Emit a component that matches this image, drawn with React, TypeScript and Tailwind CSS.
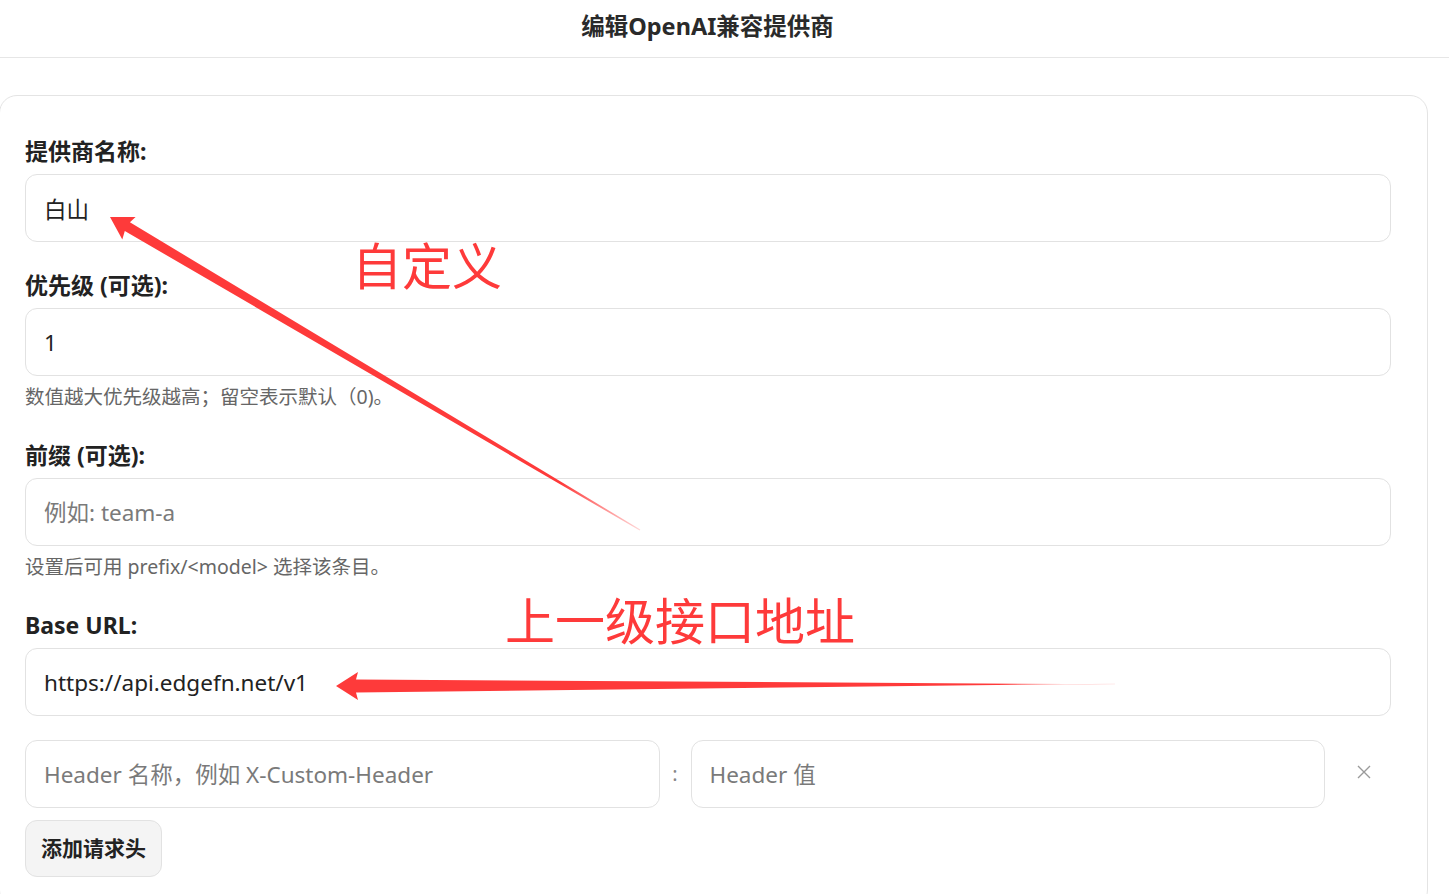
import React from "react";

const font = "font-['Noto_Sans','Noto_Sans_CJK_SC',sans-serif]";

const inputCls =
  "block w-full h-[68px] rounded-[12px] border border-[#e2e2e2] bg-white px-[18px] text-[22.5px] text-[#222] outline-none placeholder:text-[#7a7a7a]";

const Label: React.FC<{ children: React.ReactNode; className?: string }> = ({
  children,
  className = "",
}) => (
  <label
    className={`block text-[23px] leading-[30px] font-bold text-[#222] mb-[8px] ${className}`}
  >
    {children}
  </label>
);

const Hint: React.FC<{ children: React.ReactNode }> = ({ children }) => (
  <p className="mt-[8px] text-[19.5px] leading-[26px] text-[#666]">{children}</p>
);

// 标注用的箭头（覆盖在表单上面）
const Arrows = () => (
  <svg
    className="pointer-events-none absolute left-0 top-0"
    width="1449"
    height="894"
    viewBox="0 0 1449 894"
  >
    <defs>
      <linearGradient id="fade1" gradientUnits="userSpaceOnUse" x1="110" y1="217" x2="640" y2="530">
        <stop offset="0" stopColor="#fe3a3a" />
        <stop offset="0.85" stopColor="#fe3a3a" />
        <stop offset="1" stopColor="#fe3a3a" stopOpacity="0.2" />
      </linearGradient>
      <linearGradient id="fade2" gradientUnits="userSpaceOnUse" x1="336" y1="686" x2="1115" y2="684">
        <stop offset="0" stopColor="#fe3a3a" />
        <stop offset="0.85" stopColor="#fe3a3a" />
        <stop offset="1" stopColor="#fe3a3a" stopOpacity="0.2" />
      </linearGradient>
    </defs>
    <polygon
      fill="url(#fade1)"
      points="110,217 122.3,239.4 124.8,231.0 639.7,530.5 640.3,529.5 129.9,222.3 135.6,217"
    />
    <polygon
      fill="url(#fade2)"
      points="336,686 358,672 356,679.5 1115,684.3 1115,683.7 356,692.5 358,700"
    />
  </svg>
);

export default function App() {
  return (
    <div className={`relative min-h-[894px] overflow-hidden bg-white ${font}`}>
      <header className="flex h-[58px] items-center justify-center border-b border-[#e6e6e6] pb-[4px] pr-[34px]">
        <h1 className="text-[23.5px] font-bold text-[#2a2a2a]">编辑OpenAI兼容提供商</h1>
      </header>

      <div className="mt-[37px] -ml-[1px] w-[1429px] rounded-[18px] border border-[#e4e4e4] pt-[40px] pb-[30px] pl-[25px] pr-[36px]">
        <Label>提供商名称:</Label>
        <input className={inputCls} defaultValue="白山" />

        <Label className="mt-[28px]">优先级 (可选):</Label>
        <input className={inputCls} defaultValue="1" />
        <Hint>数值越大优先级越高；留空表示默认（0)。</Hint>

        <Label className="mt-[30px]">前缀 (可选):</Label>
        <input className={inputCls} placeholder="例如: team-a" />
        <Hint>设置后可用 prefix/&lt;model&gt; 选择该条目。</Hint>

        <Label className="mt-[30px]">Base URL:</Label>
        <input className={inputCls} defaultValue="https://api.edgefn.net/v1" />

        <div className="mt-[24px] flex items-center">
          <input className={`${inputCls} flex-1`} placeholder="Header 名称，例如 X-Custom-Header" />
          <span className="w-[31px] text-center text-[20px] text-[#888]">:</span>
          <input className={`${inputCls} flex-1`} placeholder="Header 值" />
          <button className="flex w-[66px] items-center justify-center pb-[5px] pl-[12px]">
            <svg width="14" height="14" viewBox="0 0 14 14" fill="none" stroke="#9a9a9a" strokeWidth="1.4">
              <path d="M1 1l12 12M13 1L1 13" />
            </svg>
          </button>
        </div>

        <button className="mt-[12px] h-[57px] rounded-[12px] border border-[#e2e2e2] bg-[#f4f4f4] px-[15px] text-[21px] font-bold text-[#222]">
          添加请求头
        </button>
      </div>

      <Arrows />
      <span className="pointer-events-none absolute left-[352px] top-[241px] text-[50px] leading-none text-[#fe3a3a]">
        自定义
      </span>
      <span className="pointer-events-none absolute left-[505px] top-[596px] text-[50px] leading-none text-[#fe3a3a]">
        上一级接口地址
      </span>
    </div>
  );
}
